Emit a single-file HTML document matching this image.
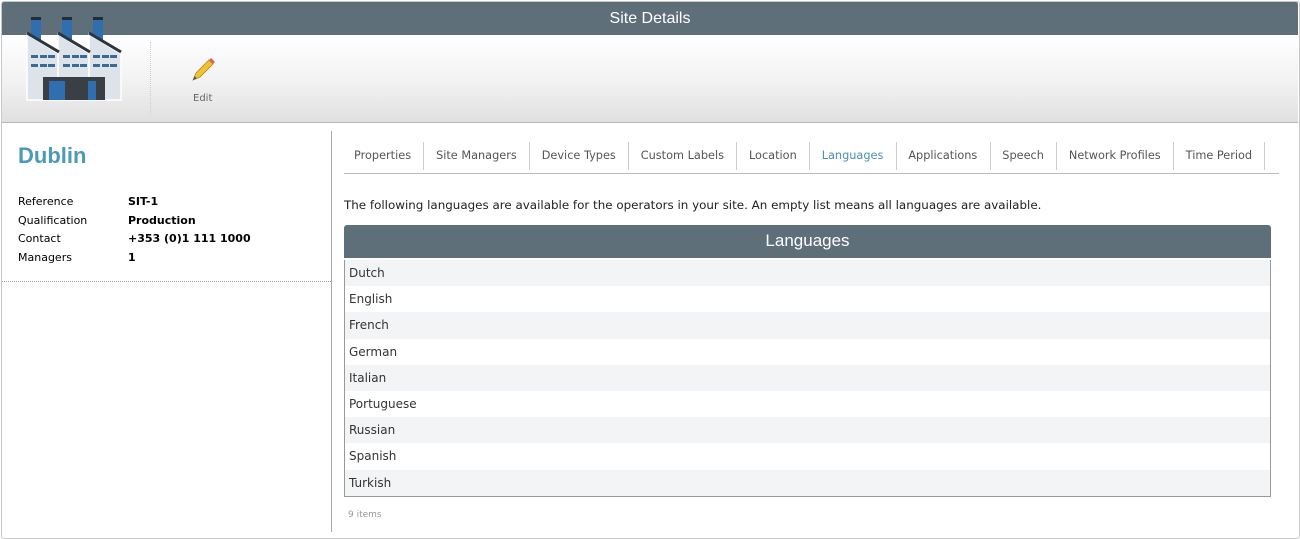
<!DOCTYPE html>
<html><head><style>
body{margin:0;width:1300px;height:539px;background:#fff;font-family:"DejaVu Sans",Verdana,sans-serif;overflow:hidden;position:relative}
.frame{position:absolute;left:1px;top:1px;width:1297px;height:536px;border:1px solid #c8c8c8;border-radius:3px}
.hdr{position:absolute;left:2px;top:2px;width:1296px;height:33px;background:#5f6f7a;color:#fff;font:16px "Liberation Sans",sans-serif;text-align:center;line-height:33px;border-radius:2px 2px 0 0}
.tb{position:absolute;left:2px;top:35px;width:1296px;height:87px;background:linear-gradient(#fff,#f3f3f3 50%,#e0e0e0);border-bottom:1px solid #b8b8b8}
.sep{position:absolute;left:150px;top:42px;height:72px;border-left:1px dotted #ccc}
.edit{position:absolute;left:193px;top:93px;font-size:10px;color:#666}
.vl{position:absolute;left:331px;top:131px;height:401px;border-left:1px solid #aaa}
h1{position:absolute;left:18px;top:143px;margin:0;font:bold 22px "Liberation Sans",sans-serif;color:#4a9ab8}
.props{position:absolute;left:18px;top:193px;font-size:11px;line-height:18.7px;color:#000}
.props b{position:absolute;left:110px;white-space:nowrap}
.dot{position:absolute;left:2px;top:281px;width:329px;border-top:1px dotted #999}
.tabs{position:absolute;left:344px;top:142px;width:935px;height:31px;border-bottom:1px solid #bbb;font-size:11.3px;color:#555;white-space:nowrap}
.tabs span{display:inline-block;padding:0 12.2px 0 12.2px;height:28px;line-height:27px;border-right:1px solid #ccc;margin-right:-4px}
.tabs span:first-child{padding-left:10px}
.desc{position:absolute;left:344px;top:198px;font-size:11.9px;color:#222;white-space:nowrap}
.th{position:absolute;left:344px;top:225px;width:927px;height:33px;background:#5f6f7a;color:#fff;font:17px "Liberation Sans",sans-serif;text-align:center;line-height:31px;border-radius:3px 3px 0 0}
.list{position:absolute;left:344px;top:260px;width:925px;border:1px solid #999;border-top:none}
.list div{height:26.2px;line-height:26px;padding-left:4px;font-size:12px;color:#333}
.list div:nth-child(odd){background:#f3f4f6}
.cnt{position:absolute;left:348px;top:510px;font-size:9px;color:#999}
</style></head><body>
<div class="frame"></div>
<div class="hdr">Site Details</div>
<div class="tb"></div>
<svg style="position:absolute;left:24px;top:14px" width="104" height="88" viewBox="0 0 104 88">
<g fill="#2f6fb0"><rect x="7" y="3" width="10" height="24"/><rect x="38" y="3" width="10" height="24"/><rect x="69" y="3" width="10" height="24"/></g>
<g fill="#222d38"><rect x="7" y="3" width="10" height="3"/><rect x="38" y="3" width="10" height="3"/><rect x="69" y="3" width="10" height="3"/></g>
<g fill="#dde3e8" stroke="#fff" stroke-width="1.5"><polygon points="3,20 35,40 35,86 3,86"/><polygon points="34,20 66,40 66,86 34,86"/><polygon points="65,20 97,40 97,86 65,86"/></g>
<g stroke="#2b3540" stroke-width="3"><line x1="3" y1="19" x2="35" y2="38"/><line x1="34" y1="19" x2="66" y2="38"/><line x1="65" y1="19" x2="97" y2="38"/></g>
<g fill="#3a6a9a">
<rect x="7" y="41" width="7" height="3"/><rect x="16" y="41" width="7" height="3"/><rect x="24" y="41" width="7" height="3"/><rect x="39" y="41" width="7" height="3"/><rect x="48" y="41" width="7" height="3"/><rect x="56" y="41" width="7" height="3"/><rect x="69" y="41" width="7" height="3"/><rect x="78" y="41" width="7" height="3"/><rect x="86" y="41" width="7" height="3"/>
<rect x="7" y="50" width="7" height="3"/><rect x="16" y="50" width="7" height="3"/><rect x="24" y="50" width="7" height="3"/><rect x="39" y="50" width="7" height="3"/><rect x="48" y="50" width="7" height="3"/><rect x="56" y="50" width="7" height="3"/><rect x="69" y="50" width="7" height="3"/><rect x="78" y="50" width="7" height="3"/><rect x="86" y="50" width="7" height="3"/></g>
<rect x="19" y="63" width="62" height="23" fill="#3a3f45"/>
<rect x="25" y="67" width="16" height="19" fill="#2f6fb0"/><rect x="64" y="67" width="8" height="19" fill="#2f6fb0"/>
</svg>
<div class="sep"></div>
<svg style="position:absolute;left:190px;top:57px" width="26" height="26" viewBox="0 0 26 26"><polygon points="3,23 6,16 19,3 23,7 10,20" fill="#f2c230" stroke="#b08820" stroke-width=".8"/><polygon points="19,3 21,1 25,5 23,7" fill="#e06060"/><polygon points="3,23 4.5,19 7,21.5" fill="#555"/></svg>
<div class="edit">Edit</div>
<h1>Dublin</h1>
<div class="props">
<div>Reference<b>SIT-1</b></div>
<div>Qualification<b>Production</b></div>
<div>Contact<b>+353 (0)1 111 1000</b></div>
<div>Managers<b>1</b></div>
</div>
<div class="dot"></div>
<div class="vl"></div>
<div class="tabs"><span>Properties</span> <span>Site Managers</span> <span>Device Types</span> <span>Custom Labels</span> <span>Location</span> <span style="color:#4a90b0">Languages</span> <span>Applications</span> <span>Speech</span> <span>Network Profiles</span> <span>Time Period</span></div>
<div class="desc">The following languages are available for the operators in your site. An empty list means all languages are available.</div>
<div class="th">Languages</div>
<div class="list"><div>Dutch</div><div>English</div><div>French</div><div>German</div><div>Italian</div><div>Portuguese</div><div>Russian</div><div>Spanish</div><div>Turkish</div></div>
<div class="cnt">9 items</div>
</body></html>
